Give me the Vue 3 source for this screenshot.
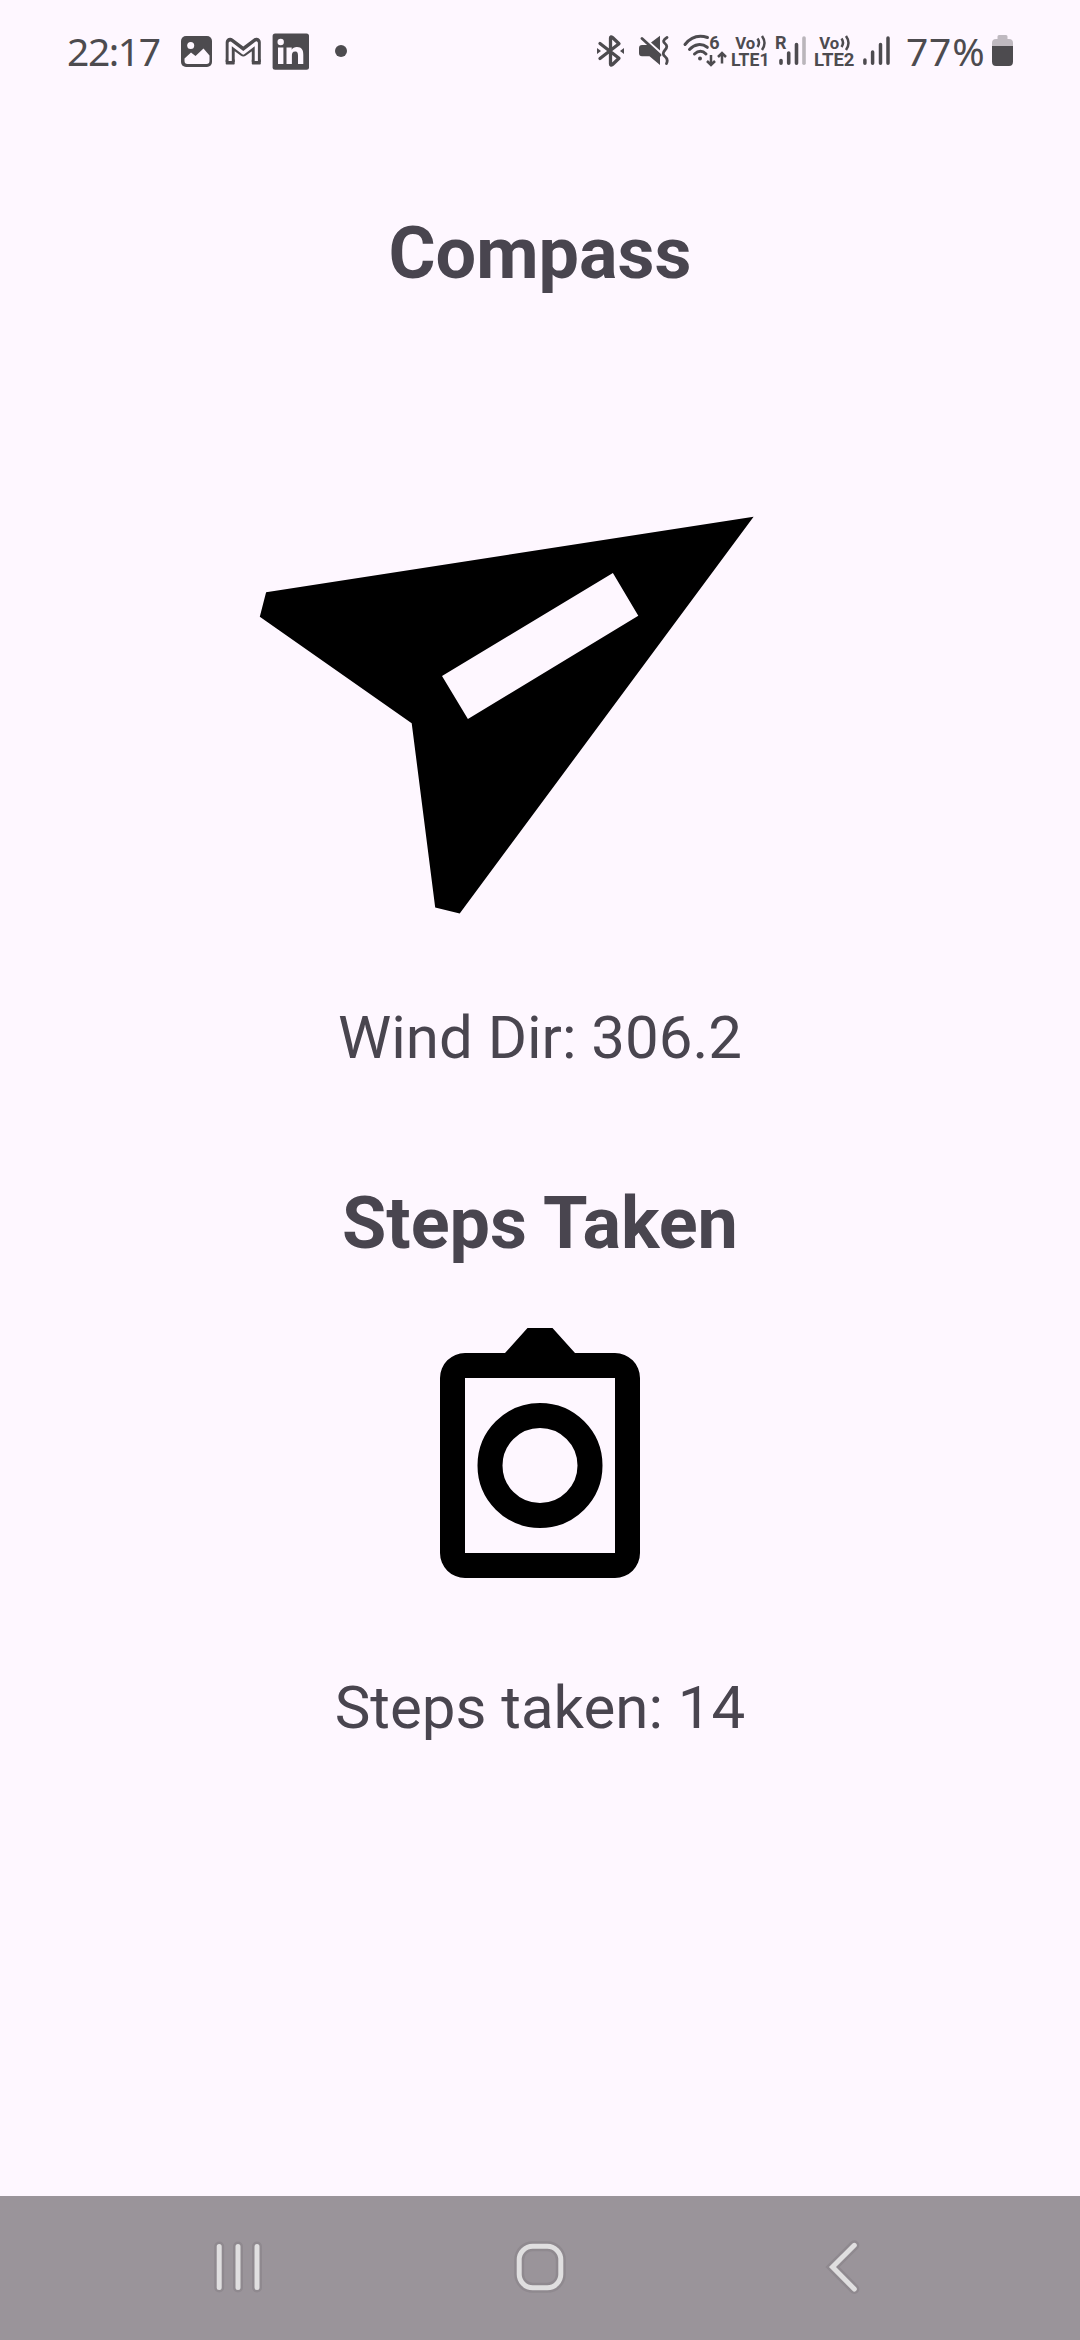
<script setup>
import { ref } from 'vue'

const windDirection = ref('306.2')
const steps = ref(14)
</script>

<template>
  <div class="screen">
    <header class="status">
      <div class="group">
        <span class="time">22:17</span>
        <svg class="picture" width="31" height="40" viewBox="181 31 31 40">
          <rect x="181" y="36" width="31" height="31" rx="5" fill="#4d4b4f" />
          <circle cx="190.7" cy="45.5" r="3.5" fill="#fef7ff" />
          <path d="M184.5 58.5l6.500-6 4.500 3.500 8-7.500 6 7v5.500q0 3-3 3h-19q-3 0-3-3z" fill="#fef7ff" />
        </svg>
        <svg class="gmail" width="37" height="40" viewBox="225 31 37 40" fill="none" stroke-linejoin="round">
          <path d="M230.200 62V42.300L243.300 52l13-9.700V62" stroke="#4d4b4f" stroke-width="9" />
          <path d="M226.500 60h7.400v3.700h-7.400zM252.600 60h7.400v3.700h-7.400z" fill="#4d4b4f" stroke="#4d4b4f" stroke-width="1.600" />
          <path d="M230.200 61V43L243.300 53l13-10v18" stroke="#fef7ff" stroke-width="3.200" />
        </svg>
        <svg class="linkedin" width="37" height="40" viewBox="272 31 37 40">
          <rect x="272.600" y="33.400" width="36.400" height="36.300" rx="2.500" fill="#4d4b4f" />
          <circle cx="280.700" cy="42" r="3.200" fill="#fef7ff" />
          <path d="M278 47.500h5.400v16.500H278zM286.500 47.500h5.200v2.300c1-1.700 2.800-2.700 5.200-2.700 5 0 6.400 3.200 6.400 7.600V64h-5.300v-8.200c0-2.300-.3-4.300-2.900-4.300s-3.200 1.900-3.200 4.200V64h-5.400z" fill="#fef7ff" />
        </svg>
        <i class="more"></i>
      </div>
      <div class="group">
        <svg width="28" height="40" viewBox="597 31 28 40" fill="none" stroke="#4d4b4f">
          <path d="M600 43.500l19 14.700-6.500 6.300q-2 1.500-2-.5V38q0-2 2-.5l6.500 6.200L600 58.500" stroke-width="3.300" stroke-linecap="round" stroke-linejoin="round" />
          <path d="M597 48l4 3-4 3zM624 48l-4 3 4 3z" fill="#4d4b4f" stroke="none" />
        </svg>
        <svg class="mute" width="32" height="40" viewBox="638 31 32 40">
          <path d="M639 48q0-3 3-3h6.500L660 54.500V65l-10.500-8.700H642q-3 0-3-3zM651 42.500l9-6.700v14.700z" fill="#4d4b4f" />
          <path d="M642 38.500l18 16.500M667 37.500q-5.500 3.300-2 6t0 6.500 0 6.500 1.500 7" fill="none" stroke="#4d4b4f" stroke-width="2.800" stroke-linecap="round" />
        </svg>
        <svg class="wifi" width="46" height="40" viewBox="682 31 46 40" fill="none" stroke="#4d4b4f" stroke-width="3" stroke-linecap="round">
          <path d="M685 44.500c6.300-8 14.500-9.500 22.500-7M689.500 49.500c5-5.500 12-6.500 17.800-2.200M694.500 54c4-3.800 8-3.800 11.500 0" />
          <circle cx="700" cy="58.500" r="2" fill="#4d4b4f" stroke="none" />
          <path d="M711 55v10m-4-4l4 4 4-4M722 63.500V53m-4 4l4-4 4 4" stroke-width="2.500" stroke-linecap="butt" />
          <text x="709.300" y="49" font-size="18" stroke="none">6</text>
        </svg>
        <svg class="volte" width="40" height="40" viewBox="731 31 40 40">
          <text x="735.300" y="49" font-size="17" textLength="20" lengthAdjust="spacingAndGlyphs">Vo</text>
          <path d="M757.500 38.500q3 4 0 8.500M762 36q5 7 0 14" fill="none" stroke="#4d4b4f" stroke-width="2.500" />
          <text x="731" y="66" font-size="17.500" textLength="38.500" lengthAdjust="spacingAndGlyphs">LTE1</text>
        </svg>
        <svg class="signal-roaming" width="34" height="40" viewBox="775 31 34 40" stroke="#4d4b4f" stroke-width="3.600" stroke-linecap="round">
          <text x="775" y="49" font-size="18" stroke="none">R</text>
          <path d="M781 60.500v2.800M788.700 53v10.300M796.500 44.500v18.800" />
          <path d="M804 38v25.300" stroke="#bab5bb" />
        </svg>
        <svg class="volte2" width="41" height="40" viewBox="814 31 41 40">
          <text x="819.300" y="49" font-size="17" textLength="20" lengthAdjust="spacingAndGlyphs">Vo</text>
          <path d="M841.500 38.500q3 4 0 8.500M846 36q5 7 0 14" fill="none" stroke="#4d4b4f" stroke-width="2.500" />
          <text x="814" y="66" font-size="17.500" textLength="40.500" lengthAdjust="spacingAndGlyphs">LTE2</text>
        </svg>
        <svg class="signal" width="28" height="40" viewBox="863 31 28 40" stroke="#4d4b4f" stroke-width="3.500" stroke-linecap="round">
          <path d="M864.900 60v3.300M872.600 52v11.300M880.500 44.500v18.800M888 38v25.300" />
        </svg>
        <span class="percent">77%</span>
        <svg class="battery" width="21" height="40" viewBox="992 31 21 40">
          <path d="M997.500 39v-2.500q0-1.500 1.500-1.500h7q1.500 0 1.500 1.500V39h1.500q4 0 4 4v4h-21v-4q0-4 4-4z" fill="#bfb9c0" />
          <path d="M992 46h21v15.500q0 4.500-4 4.500h-13q-4 0-4-4.500z" fill="#4d4b4f" />
        </svg>
      </div>
    </header>

    <main class="content">
      <h1 class="title">Compass</h1>
      <svg class="needle" width="510" height="410" viewBox="250 510 510 410">
        <path fill-rule="evenodd" d="M753.600 516.700L266.100 592.300 259.800 616.800 411.700 723.200 435.200 907.500 459.700 913.500zM612.900 573L638.300 615.800 467.900 718.900 442 676.100z" />
      </svg>
      <p class="reading">Wind Dir: {{ windDirection }}</p>
      <h2 class="title steps-title">Steps Taken</h2>
      <svg class="clipboard" width="200" height="250" viewBox="440 1328.300 200 250">
        <path fill-rule="evenodd" d="M465 1353.300H505L527.500 1328.300H552.500L575 1353.300H615A25 25 0 0 1 640 1378.300V1553.300A25 25 0 0 1 615 1578.300H465A25 25 0 0 1 440 1553.300V1378.300A25 25 0 0 1 465 1353.300ZM465 1378.300V1553.300H615V1378.300Z" />
        <circle cx="540" cy="1465.800" r="50" fill="none" stroke="#000" stroke-width="25" />
      </svg>
      <p class="reading steps-reading">Steps taken: {{ steps }}</p>
    </main>

    <nav class="navbar">
      <svg width="60" height="60" viewBox="208 2238 60 60">
        <path class="halo" d="M219.200 2246.500v41M238 2246.500v41M257 2246.500v41" />
        <path class="line" d="M219.200 2246.500v41M238 2246.500v41M257 2246.500v41" />
      </svg>
      <svg width="60" height="60" viewBox="510 2238 60 60">
        <rect class="halo" x="519.200" y="2246.200" width="41.600" height="41.600" rx="13.500" />
        <rect class="line" x="519.200" y="2246.200" width="41.600" height="41.600" rx="13.500" />
      </svg>
      <svg width="60" height="60" viewBox="812 2238 60 60">
        <path class="halo" d="M854.300 2245.300L832.500 2267l21.800 22" />
        <path class="line" d="M854.300 2245.300L832.500 2267l21.800 22" />
      </svg>
    </nav>
  </div>
</template>

<style>
body {
  background: #fef7ff;
}
</style>

<style scoped>
.screen {
  display: flex;
  flex-direction: column;
  width: 1080px;
  height: 2340px;
  overflow: hidden;
  background: #fef7ff;
  color: #49454f;
  font-family: Roboto, sans-serif;
}
svg {
  display: block;
  flex: none;
}
.status {
  display: flex;
  justify-content: space-between;
  height: 102px;
  padding: 0 67px;
  box-sizing: border-box;
  color: #4d4b4f;
}
.group {
  display: flex;
  align-items: center;
}
.status text {
  fill: #4d4b4f;
  font-family: Roboto, sans-serif;
  font-weight: 700;
}
.time,
.percent {
  font: 400 39px/54px "Noto Sans", sans-serif;
  white-space: nowrap;
}
.time {
  width: 114px;
  letter-spacing: -1.4px;
}
.gmail {
  margin-left: 13px;
}
.linkedin {
  margin-left: 10px;
}
.more {
  width: 12px;
  height: 12px;
  margin-left: 26px;
  border-radius: 50%;
  background: #4d4b4f;
}
.mute {
  margin-left: 13px;
}
.wifi {
  margin-left: 12px;
}
.volte {
  margin-left: 3px;
}
.signal-roaming {
  margin-left: 4px;
}
.volte2 {
  margin-left: 5px;
}
.signal {
  margin-left: 8px;
}
.percent {
  width: 86px;
  margin-left: 15px;
  letter-spacing: 0.8px;
}
.content {
  display: flex;
  flex: 1;
  flex-direction: column;
  align-items: center;
  padding-top: 109px;
}
.title {
  margin: 0;
  font-size: 72px;
  font-weight: 700;
  line-height: 85px;
}
.needle {
  margin-top: 214px;
  margin-right: 70px;
}
.reading {
  margin: 82px 0 0;
  font-size: 60px;
  line-height: 71px;
}
.steps-title {
  margin-top: 108px;
}
.clipboard {
  margin-top: 62.3px;
}
.steps-reading {
  margin-top: 93.7px;
}
.navbar {
  display: flex;
  align-items: center;
  justify-content: space-between;
  height: 144px;
  padding: 0 208px;
  box-sizing: border-box;
  background: #9a949a;
}
.navbar svg {
  fill: none;
  stroke-linecap: round;
}
.halo {
  stroke: #8f898f;
  stroke-width: 10;
}
.line {
  stroke: #e0dfe0;
  stroke-width: 5;
}
</style>
